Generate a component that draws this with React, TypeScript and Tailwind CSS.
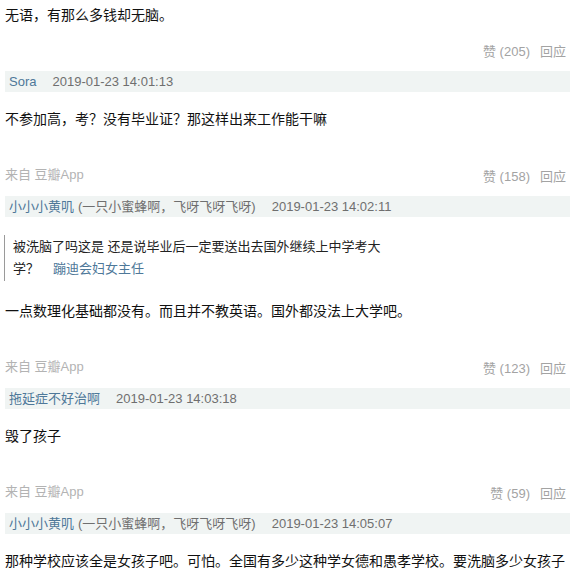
const font = {
  fontFamily: '"Liberation Sans", Arial, "Noto Sans CJK SC", sans-serif',
};

type Comment = {
  name: string;
  extra?: string;
  date: string;
  quote?: { text: string; tail: string; author: string };
  text: string;
  from?: boolean;
  likes?: number;
};

const comments: Comment[] = [
  {
    name: "Sora",
    date: "2019-01-23 14:01:13",
    text: "不参加高，考？没有毕业证？那这样出来工作能干嘛",
    from: true,
    likes: 158,
  },
  {
    name: "小小小黄叽",
    extra: "(一只小蜜蜂啊，飞呀飞呀飞呀)",
    date: "2019-01-23 14:02:11",
    quote: {
      text: "被洗脑了吗这是 还是说毕业后一定要送出去国外继续上中学考大",
      tail: "学？",
      author: "蹦迪会妇女主任",
    },
    text: "一点数理化基础都没有。而且并不教英语。国外都没法上大学吧。",
    from: true,
    likes: 123,
  },
  {
    name: "拖延症不好治啊",
    date: "2019-01-23 14:03:18",
    text: "毁了孩子",
    from: true,
    likes: 59,
  },
  {
    name: "小小小黄叽",
    extra: "(一只小蜜蜂啊，飞呀飞呀飞呀)",
    date: "2019-01-23 14:05:07",
    text: "那种学校应该全是女孩子吧。可怕。全国有多少这种学女德和愚孝学校。要洗脑多少女孩子",
  },
];

function Ops({ likes, from }: { likes: number; from?: boolean }) {
  return (
    <div className="flex justify-between items-start h-[20px] text-[13px] leading-[20px] pr-[10px]">
      <span className="text-[#b3b3b3]">{from ? "来自 豆瓣App" : ""}</span>
      <span className="mt-[2px] text-[#a3a3a3] flex">
        <span>赞 ({likes})</span>
        <span className="ml-[10px]">回应</span>
      </span>
    </div>
  );
}

function Item({ c }: { c: Comment }) {
  return (
    <div>
      <div className="mt-[11px] h-[21px] bg-[#f0f4f3] flex items-center px-[4px] text-[13px] mr-[6px]">
        <span className="text-[#4e7899]">{c.name}</span>
        {c.extra && <span className="text-[#6f6f6f] ml-[4px]">{c.extra}</span>}
        <span className="text-[#6f6f6f] ml-[16px]">{c.date}</span>
      </div>
      {c.quote && (
        <div className="mt-[18px] ml-[-1px] border-l border-[#9a9a9a] pl-[8px] py-[1px] text-[13px] leading-[22px] text-[#222] w-[384px]">
          {c.quote.text}
          <br />
          {c.quote.tail}
          <span className="ml-[14px] text-[#4e7899]">{c.quote.author}</span>
        </div>
      )}
      <p
        className={
          (c.quote ? "mt-[19px]" : "mt-[16px]") +
          " text-[14px] leading-[22px] text-[#111]"
        }
      >
        {c.text}
      </p>
      {c.likes !== undefined && (
        <div className="mt-[35px]">
          <Ops likes={c.likes} from={c.from} />
        </div>
      )}
    </div>
  );
}

export default function App() {
  return (
    <div className="w-[576px] bg-white pl-[5px] pt-[4px]" style={font}>
      <p className="text-[14px] leading-[22px] text-[#111]">
        无语，有那么多钱却无脑。
      </p>
      <div className="mt-[14px]">
        <Ops likes={205} />
      </div>
      {comments.map((c, i) => (
        <Item key={i} c={c} />
      ))}
    </div>
  );
}
